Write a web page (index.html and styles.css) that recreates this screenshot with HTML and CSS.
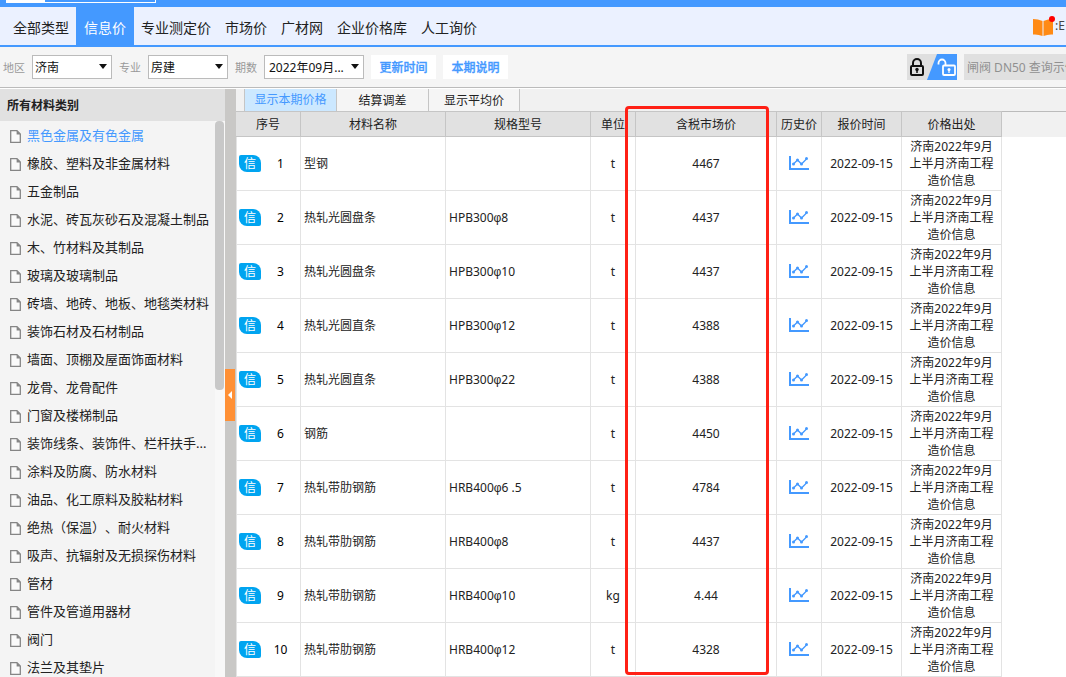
FILE: index.html
```html
<!DOCTYPE html>
<html lang="zh-CN">
<head>
<meta charset="utf-8">
<title>信息价</title>
<link rel="stylesheet" href="styles.css">
</head>
<body>
<svg class="defs" aria-hidden="true">
  <symbol id="page" viewBox="0 0 11 13"><path d="M.7 .7H7L10.3 4V12.3H.7Z" fill="#fafafa" stroke="#858585" stroke-width="1.3"/><path d="M6.6 .7V4.4H10.3Z" fill="#858585"/></symbol>
  <symbol id="chart" viewBox="0 0 20 15"><path d="M1 0V13H20" fill="none" stroke="#49f" stroke-width="2"/><path d="M4.500 8L8.500 4L12.500 8L17.500 3" fill="none" stroke="#49f" stroke-width="1.300"/><g fill="#49f"><circle cx="4.500" cy="8" r="1.500"/><circle cx="8.500" cy="4" r="1.500"/><circle cx="12.500" cy="8" r="1.500"/><circle cx="17.500" cy="2.500" r="1.500"/></g></symbol>
</svg>
<div class="app">
  <div class="topbar"><div class="topbar-box"></div></div>
  <nav class="nav">
    <a href="#">全部类型</a>
    <a href="#" class="active">信息价</a>
    <a href="#">专业测定价</a>
    <a href="#">市场价</a>
    <a href="#">广材网</a>
    <a href="#">企业价格库</a>
    <a href="#">人工询价</a>
    <div class="guide">
      <svg class="book" viewBox="0 0 22 21" aria-hidden="true"><path d="M0 3Q5 3 9.500 5V20Q5 18 0 18.500ZM10.500 5Q15 3 20 3V18.500Q15 18 10.500 20Z" fill="#ff8a14"/><circle cx="19" cy="3" r="3" fill="#f00"/></svg>
      <span>:E</span>
    </div>
  </nav>
  <form class="filters">
    <label for="area">地区</label>
    <div class="pick"><select id="area"><option>济南</option></select></div>
    <label for="major">专业</label>
    <div class="pick"><select id="major"><option>房建</option></select></div>
    <label for="period">期数</label>
    <div class="pick pick-wide"><select id="period"><option>2022年09月...</option></select></div>
    <button type="button" class="action">更新时间</button>
    <button type="button" class="action">本期说明</button>
    <button type="button" class="lock" aria-label="锁定">
      <svg viewBox="0 0 50 26" aria-hidden="true">
        <path d="M30 0H50V26H20Z" fill="#49f"/>
        <rect x="4" y="12" width="12" height="9" rx="1" fill="none" stroke="#111" stroke-width="2"/>
        <path d="M6 12V9a4 4 0 0 1 8 0V12" fill="none" stroke="#111" stroke-width="2"/>
        <path d="M10 15V19" stroke="#111" stroke-width="1.500"/><circle cx="10" cy="15.500" r="1.700" fill="#111"/>
        <rect x="36" y="11.500" width="12" height="9.500" rx="1" fill="none" stroke="#fff" stroke-width="1.800"/>
        <path d="M31.500 10.500V9a3.500 3.500 0 0 1 7 0V11.500" fill="none" stroke="#fff" stroke-width="1.800"/>
        <path d="M42 15V19" stroke="#fff" stroke-width="1.200"/><circle cx="42" cy="15.500" r="1.500" fill="#fff"/>
      </svg>
    </button>
    <input class="search" type="text" placeholder="闸阀 DN50 查询示例" aria-label="查询">
  </form>
  <div class="body">
    <aside class="side">
      <h2>所有材料类别</h2>
      <div class="side-body">
        <ul class="cats" id="cats"></ul>
        <div class="track"><div class="thumb"></div></div>
      </div>
    </aside>
    <div class="split"><button type="button" aria-label="收起"></button></div>
    <main class="main">
      <div class="tabs">
        <button type="button" class="on">显示本期价格</button>
        <button type="button">结算调差</button>
        <button type="button">显示平均价</button>
      </div>
      <div class="grid">
        <table>
          <colgroup><col class="c-no"><col class="c-name"><col class="c-name"><col class="c-unit"><col class="c-price"><col class="c-unit"><col class="c-date"><col class="c-src"></colgroup>
          <thead><tr><th>序号</th><th>材料名称</th><th>规格型号</th><th>单位</th><th>含税市场价</th><th>历史价</th><th>报价时间</th><th>价格出处</th></tr></thead>
          <tbody id="rows"></tbody>
        </table>
      </div>
      <div class="mark"></div>
    </main>
  </div>
</div>
<script src="app.js"></script>
</body>
</html>
```
FILE: app.js
```js
const cats = ['黑色金属及有色金属', '橡胶、塑料及非金属材料', '五金制品', '水泥、砖瓦灰砂石及混凝土制品', '木、竹材料及其制品', '玻璃及玻璃制品', '砖墙、地砖、地板、地毯类材料', '装饰石材及石材制品', '墙面、顶棚及屋面饰面材料', '龙骨、龙骨配件', '门窗及楼梯制品', '装饰线条、装饰件、栏杆扶手...', '涂料及防腐、防水材料', '油品、化工原料及胶粘材料', '绝热（保温）、耐火材料', '吸声、抗辐射及无损探伤材料', '管材', '管件及管道用器材', '阀门', '法兰及其垫片'];
document.getElementById('cats').innerHTML = cats.map((c, i) =>
  `<li><a href="#"${i ? '' : ' class="current"'}><svg class="page" aria-hidden="true"><use href="#page"/></svg>${c}</a></li>`).join('');

const rows = [
  ['型钢', '', 't', '4467'],
  ['热轧光圆盘条', 'HPB300φ8', 't', '4437'],
  ['热轧光圆盘条', 'HPB300φ10', 't', '4437'],
  ['热轧光圆直条', 'HPB300φ12', 't', '4388'],
  ['热轧光圆直条', 'HPB300φ22', 't', '4388'],
  ['钢筋', '', 't', '4450'],
  ['热轧带肋钢筋', 'HRB400φ6 .5', 't', '4784'],
  ['热轧带肋钢筋', 'HRB400φ8', 't', '4437'],
  ['热轧带肋钢筋', 'HRB400φ10', 'kg', '4.44'],
  ['热轧带肋钢筋', 'HRB400φ12', 't', '4328']
];
const phi = s => s.replace('φ', '<span class="phi">φ</span>');
document.getElementById('rows').innerHTML = rows.map(([name, spec, unit, price], i) =>
  `<tr><td><div class="no"><span class="badge">信</span><span class="num">${i + 1}</span></div></td><td class="left">${name}</td><td class="left">${phi(spec)}</td><td>${unit}</td><td>${price}</td><td><svg class="chart" aria-hidden="true"><use href="#chart"/></svg></td><td>2022-09-15</td><td>济南2022年9月<br>上半月济南工程<br>造价信息</td></tr>`).join('');
```
FILE: styles.css
```css
* { box-sizing: border-box; }
body { margin: 0; font: 12px/17px "Noto Sans", "Noto Sans CJK SC", sans-serif; color: #222; background: #fff; }
button, select, input { font: inherit; color: inherit; border: 0; margin: 0; padding: 0; border-radius: 0; }
a { color: inherit; text-decoration: none; }
.defs { display: none; }
.app { display: flex; flex-direction: column; height: 100vh; overflow: hidden; }

.topbar { flex: none; height: 7px; padding-left: 6px; background: #49f; }
.topbar-box { width: 150px; height: 3px; border: solid #fff; border-width: 0 1px 1px 39px; }

.nav { flex: none; display: flex; height: 40px; padding-left: 6px; background: #ebf1ff; border-bottom: 2px solid #49f; font-size: 14px; line-height: 42px; white-space: nowrap; overflow: hidden; }
.nav a { padding: 0 7px; }
.nav a.active { padding: 0 8px; background: #49f; color: #fff; }
.guide { display: flex; margin-left: auto; padding-right: 1px; }
.guide span { font-size: 12px; line-height: 38px; color: #444; }
.book { flex: none; width: 22px; height: 21px; margin-top: 9px; }

.filters { flex: none; display: flex; align-items: center; height: 41px; padding-left: 3px; background: #f5f5f5; border-bottom: 1px solid #bbb; overflow: hidden; }
.filters label { flex: none; width: 29px; color: #999; font-size: 11px; }
.pick { flex: none; position: relative; width: 80px; height: 24px; margin-right: 7px; }
.pick-wide { width: 100px; }
.pick select { width: 100%; height: 100%; padding: 0 2px; background: #fff; border: 1px solid #bbb; appearance: none; color: #111; }
.pick-wide select { padding-left: 4px; }
.pick::after { content: ""; position: absolute; right: 5px; top: 9px; border: solid transparent; border-width: 5px 4px 0; border-top-color: #111; pointer-events: none; }
.action { flex: none; width: 65px; height: 24px; margin-right: 7px; background: #fff; color: #49f; font-weight: 500; -webkit-text-stroke: 0.3px #49f; }
.lock { flex: none; width: 50px; height: 26px; margin: 0 7px 0 auto; background: #dfdfdf; }
.lock svg { display: block; width: 50px; height: 26px; }
.search { flex: none; width: 102px; height: 26px; padding-left: 3px; background: #e0e0e0; }
.search::placeholder { color: #909090; opacity: 1; }

.body { flex: 1; display: flex; min-height: 0; padding-top: 1px; }
.side { flex: none; display: flex; flex-direction: column; width: 225px; background: #f4f4f4; }
.side h2 { flex: none; margin: 0; padding: 0 7px; height: 32px; background: #e1e1e1; font-size: 12px; line-height: 33px; font-weight: 700; }
.side-body { flex: 1; display: flex; min-height: 0; }
.cats { flex: 1; margin: 0; padding: 0 0 0 10px; list-style: none; overflow: hidden; font-size: 13px; line-height: 28px; white-space: nowrap; text-spacing-trim: space-all; }
.cats a { display: flex; align-items: center; height: 28px; }
.cats a.current { color: #49f; }
.page { flex: none; width: 11px; height: 13px; margin: 3px 6px 0 0; }
.track { width: 10px; background: #f8f8f8; }
.thumb { width: 9px; height: 269px; background: #c8c8c8; border-radius: 4px; }
.split { flex: none; display: flex; align-items: flex-start; width: 11px; background: #c9c8c6; }
.split button { display: grid; place-items: center; width: 10px; height: 52px; margin-top: 280px; background: #ff9035; }
.split button::after { content: ""; border: solid transparent; border-width: 4px 4px 4px 0; border-right-color: #fff; }

.main { flex: 1; position: relative; display: flex; flex-direction: column; min-width: 0; }
.tabs { flex: none; display: flex; height: 22px; padding-left: 8px; background: #f1f1f1; }
.tabs button { width: 91px; padding-top: 2px; background: #f5f5f5; border-right: 1px solid #c5c5c5; line-height: 20px; }
.tabs .on { width: 93px; padding-top: 0; background: #cce8ff; color: #49f; border-left: 1px solid #c5c5c5; line-height: 22px; }
.tabs button + button { width: 92px; }
.tabs button:last-child { width: 91px; }
.grid { flex: 1; min-height: 0; overflow: hidden; background: linear-gradient(#bbb 1px, #f1f1f1 1px, #f1f1f1 26px, #fff 26px); }
table { width: 766px; table-layout: fixed; border-collapse: separate; border-spacing: 0; }
.c-no { width: 65px; }
.c-name { width: 145px; }
.c-unit { width: 45px; }
.c-price { width: 141px; }
.c-date { width: 80px; }
.c-src { width: 100px; }
th { height: 26px; padding: 0; border: solid #c5c5c5; border-width: 1px 1px 1px 0; background: #e1e1e1; font-weight: 400; white-space: nowrap; }
td { height: 54px; padding: 0; border: solid #e3e3e3; border-width: 0 1px 1px 0; text-align: center; color: #222; white-space: nowrap; }
td:first-child { border-left: 1px solid #e3e3e3; }
td.left { padding-left: 3px; text-align: left; }
.phi { font-family: "Liberation Sans", sans-serif; }
.no { display: flex; align-items: center; padding-left: 2px; }
.badge { width: 22px; height: 17px; background: #00a4f0; color: #fff; border-radius: 2px 8px 2px 8px; line-height: 17px; }
.num { flex: 1; color: #000; }
.chart { display: block; width: 20px; height: 15px; margin: 0 auto; }
.mark { position: absolute; left: 389px; top: 17px; width: 144px; height: 569px; border: 3px solid #ff2015; border-radius: 4px; pointer-events: none; }
```
